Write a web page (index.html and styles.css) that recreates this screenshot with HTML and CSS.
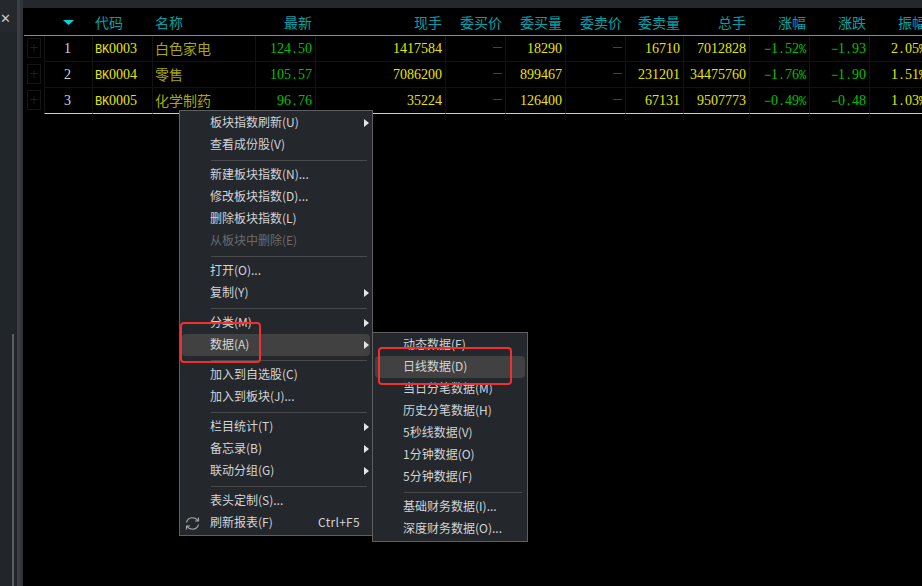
FILE: index.html
```html
<!DOCTYPE html>
<html lang="zh-CN">
<head>
<meta charset="utf-8">
<title>板块报表</title>
<link rel="stylesheet" href="styles.css">
</head>
<body>
<div class="app">
  <aside class="side">
    <div class="panel">
      <div class="panel-head"><span class="close">✕</span></div>
      <div class="panel-body"><div class="scroll"></div></div>
    </div>
    <div class="strip-a"></div>
    <div class="strip-b"></div>
  </aside>
  <main class="main">
    <div class="topbar"></div>
    <div class="table">
      <div class="row head">
        <div class="c gut"></div>
        <div class="c num"><svg class="sort" width="11" height="5" viewBox="0 0 11 5"><path d="M0 0H11L5.500 5Z" fill="#00d8d8"/></svg></div>
        <div class="c l">代码</div>
        <div class="c l">名称</div>
        <div class="c">最新</div>
        <div class="c">现手</div>
        <div class="c">委买价</div>
        <div class="c">委买量</div>
        <div class="c">委卖价</div>
        <div class="c">委卖量</div>
        <div class="c">总手</div>
        <div class="c">涨幅</div>
        <div class="c">涨跌</div>
        <div class="c">振幅</div>
      </div>
      <div class="row">
        <div class="c gut"><span class="plus">+</span></div>
        <div class="c num">1</div>
        <div class="c l y"><span class="bk">BK</span>0003</div>
        <div class="c l name">白色家电</div>
        <div class="c g">124<span class="dot">.</span>50</div>
        <div class="c y">1417584</div>
        <div class="c g"><span class="dash">—</span></div>
        <div class="c y">18290</div>
        <div class="c g"><span class="dash">—</span></div>
        <div class="c y">16710</div>
        <div class="c y">7012828</div>
        <div class="c g"><span class="minus">−</span>1<span class="dot">.</span>52<span class="pct">%</span></div>
        <div class="c g"><span class="minus">−</span>1<span class="dot">.</span>93</div>
        <div class="c y">2<span class="dot">.</span>05<span class="pct">%</span></div>
      </div>
      <div class="row">
        <div class="c gut"><span class="plus">+</span></div>
        <div class="c num">2</div>
        <div class="c l y"><span class="bk">BK</span>0004</div>
        <div class="c l name">零售</div>
        <div class="c g">105<span class="dot">.</span>57</div>
        <div class="c y">7086200</div>
        <div class="c g"><span class="dash">—</span></div>
        <div class="c y">899467</div>
        <div class="c g"><span class="dash">—</span></div>
        <div class="c y">231201</div>
        <div class="c y">34475760</div>
        <div class="c g"><span class="minus">−</span>1<span class="dot">.</span>76<span class="pct">%</span></div>
        <div class="c g"><span class="minus">−</span>1<span class="dot">.</span>90</div>
        <div class="c y">1<span class="dot">.</span>51<span class="pct">%</span></div>
      </div>
      <div class="row last">
        <div class="c gut"><span class="plus">+</span></div>
        <div class="c num">3</div>
        <div class="c l y"><span class="bk">BK</span>0005</div>
        <div class="c l name">化学制药</div>
        <div class="c g">96<span class="dot">.</span>76</div>
        <div class="c y">35224</div>
        <div class="c g"><span class="dash">—</span></div>
        <div class="c y">126400</div>
        <div class="c g"><span class="dash">—</span></div>
        <div class="c y">67131</div>
        <div class="c y">9507773</div>
        <div class="c g"><span class="minus">−</span>0<span class="dot">.</span>49<span class="pct">%</span></div>
        <div class="c g"><span class="minus">−</span>0<span class="dot">.</span>48</div>
        <div class="c y">1<span class="dot">.</span>03<span class="pct">%</span></div>
      </div>
    </div>
  </main>
</div>

<div class="menu ctx">
  <div class="item sub">板块指数刷新(U)</div>
  <div class="item">查看成份股(V)</div>
  <div class="sep"></div>
  <div class="item">新建板块指数(N)...</div>
  <div class="item">修改板块指数(D)...</div>
  <div class="item">删除板块指数(L)</div>
  <div class="item off">从板块中删除(E)</div>
  <div class="sep"></div>
  <div class="item">打开(O)...</div>
  <div class="item sub">复制(Y)</div>
  <div class="sep"></div>
  <div class="item sub">分类(M)</div>
  <div class="item sub on">数据(A)</div>
  <div class="sep"></div>
  <div class="item">加入到自选股(C)</div>
  <div class="item">加入到板块(J)...</div>
  <div class="sep"></div>
  <div class="item sub">栏目统计(T)</div>
  <div class="item sub">备忘录(B)</div>
  <div class="item sub">联动分组(G)</div>
  <div class="sep"></div>
  <div class="item">表头定制(S)...</div>
  <div class="item">
    <svg class="refresh" width="15" height="15" viewBox="0 0 15 15" fill="none" stroke="#a8a8a8" stroke-width="1.100">
      <path d="M1.500 6.500C2.300 3.500 4.800 1.800 7.500 1.800C9.800 1.800 11.700 3 13 4.800"/>
      <path d="M13.500 1.500V5H10"/>
      <path d="M13.500 8.500C12.700 11.500 10.200 13.200 7.500 13.200C5.200 13.200 3.300 12 2 10.200"/>
      <path d="M1.500 13.500V10H5"/>
    </svg>
    刷新报表(F)<span class="short">Ctrl+F5</span>
  </div>
</div>

<div class="menu dataMenu">
  <div class="item">动态数据(F)</div>
  <div class="item on">日线数据(D)</div>
  <div class="item">当日分笔数据(M)</div>
  <div class="item">历史分笔数据(H)</div>
  <div class="item">5秒线数据(V)</div>
  <div class="item">1分钟数据(O)</div>
  <div class="item">5分钟数据(F)</div>
  <div class="sep"></div>
  <div class="item">基础财务数据(I)...</div>
  <div class="item">深度财务数据(O)...</div>
</div>

<div class="mark mark-a"></div>
<div class="mark mark-b"></div>
</body>
</html>
```

FILE: styles.css
```css
* { box-sizing: border-box; }
html, body { margin: 0; height: 100%; background: #000; overflow: hidden; }

.app { display: flex; width: 922px; height: 586px; }

/* left rail */
.side { display: flex; flex: 0 0 23px; background: #24282d; }
.panel { flex: 0 0 17px; display: flex; flex-direction: column; }
.panel-head { flex: 0 0 32px; background: #25282d; padding: 12px 0 0 0; }
.close { display: block; font: 13px/14px "DejaVu Sans", sans-serif; color: #c8c8c8; width: 10px; text-align: center; }
.panel-body { flex: 1; background: #20262a; padding: 302px 0 0 12px; }
.scroll { width: 2px; height: 100%; background: #5c5e60; }
.strip-a { flex: 0 0 3px; background: #3b3e42; }
.strip-b { flex: 0 0 3px; background: #303338; }

/* main */
.main { flex: 1; min-width: 0; display: flex; flex-direction: column; overflow: hidden; }
.topbar { flex: 0 0 8px; background: #24282d; }
.table { width: 906px; margin-left: 1px; }

.row {
  display: grid;
  grid-template-columns: 20px 48px 60px 103px 60px 130px 60px 60px 60px 58px 66px 60px 60px 60px;
  grid-template-rows: 26px;
  font: 14px/25px "Liberation Serif", "Noto Sans CJK SC", serif;
}
.row.head { grid-template-rows: 28px; border-bottom: 1px solid #00c4cc; color: #00a2a8; font-family: "Noto Sans CJK SC", sans-serif; font-size: 14px; line-height: 28px; height: 28px; }
.row.last .c:not(.gut) { border-bottom: 1px solid #e8e800; }

.c { height: 26px; overflow: hidden; text-align: right; padding-right: 3px; white-space: nowrap; border-left: 1px solid #121212; border-bottom: 1px solid #121212; }
.head .c { border: 0; height: 27px; }
.c.l { text-align: left; padding: 0 0 0 2px; }
.head .c.l { padding-left: 3px; }
.c.num { text-align: center; padding: 0 2px 0 0; color: #d4d4d4; }
.head .c.num { line-height: 24px; padding: 0; }
.c.gut { padding: 2px 3px; border: 0; }
.plus { display: block; height: 20px; width: 14px; border: 1px solid #151515; color: #1e1e1e; font: 12px/18px "DejaVu Sans", sans-serif; text-align: center; }

.y { color: #e6e600; }
.g { color: #00c000; }
.name { color: #a8a800; font-family: "Noto Sans CJK SC", sans-serif; }
.bk { font-family: "Liberation Mono", monospace; font-size: 12px; letter-spacing: -0.200px; }
.pct { font-family: "Liberation Mono", monospace; font-size: 12px; letter-spacing: -0.200px; }
.dot { padding: 0 1.750px; }
.minus { font-family: "Liberation Sans", sans-serif; font-size: 12px; }
.dash { font: 9px/1 "Liberation Sans", sans-serif; vertical-align: 3px; }
.sort { vertical-align: middle; }

/* context menus */
.menu {
  position: absolute;
  background: #24272c;
  border: 1px solid #5e5f61;
  padding: 1px 2px;
  font: 12px/20px "Noto Sans CJK SC", sans-serif;
  color: #d2d4d6;
}
.ctx { left: 179px; top: 110px; width: 194px; height: 426px; }
.dataMenu { left: 372px; top: 332px; width: 156px; height: 210px; padding-top: 1px; }

.item { position: relative; height: 22px; padding-left: 28px; border-radius: 4px; white-space: nowrap; }
.item.on { background: #414141; }
.item.off { color: #6a6b6d; }
.item.sub::after {
  content: "";
  position: absolute;
  right: 1px;
  top: 7px;
  border-left: 5px solid #e4e4e4;
  border-top: 4px solid transparent;
  border-bottom: 4px solid transparent;
}
.short { position: absolute; right: 10px; top: 0; letter-spacing: 0.300px; }
.refresh { position: absolute; left: 3px; top: 4px; }

.sep { height: 8px; padding-top: 4px; margin: 0 3px 0 29px; }
.sep::before { content: ""; display: block; height: 1px; background: #48494b; }

/* red annotation boxes */
.mark { position: absolute; border: 2px solid #ee3030; border-radius: 4px; }
.mark-a { left: 180px; top: 322px; width: 81px; height: 41px; }
.mark-b { left: 378px; top: 347px; width: 134px; height: 38px; }
```
